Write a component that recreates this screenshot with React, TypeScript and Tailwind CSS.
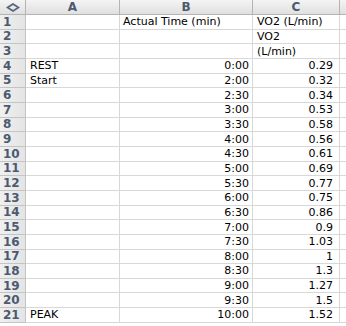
import React from "react"

const rows: [string, string, string][] = [
  ["", "Actual Time (min)", "VO2 (L/min)"],
  ["", "", "VO2"],
  ["", "", "(L/min)"],
  ["REST", "0:00", "0.29"],
  ["Start", "2:00", "0.32"],
  ["", "2:30", "0.34"],
  ["", "3:00", "0.53"],
  ["", "3:30", "0.58"],
  ["", "4:00", "0.56"],
  ["", "4:30", "0.61"],
  ["", "5:00", "0.69"],
  ["", "5:30", "0.77"],
  ["", "6:00", "0.75"],
  ["", "6:30", "0.86"],
  ["", "7:00", "0.9"],
  ["", "7:30", "1.03"],
  ["", "8:00", "1"],
  ["", "8:30", "1.3"],
  ["", "9:00", "1.27"],
  ["", "9:30", "1.5"],
  ["PEAK", "10:00", "1.52"],
]

const cols = "grid grid-cols-[26px_94px_133px_87px_6px]"

const App = () => {
  return (
    <div
      className="w-[346px] h-[326px] overflow-hidden bg-white text-[11px] text-black leading-none"
      style={{ fontFamily: '"DejaVu Sans", Verdana, sans-serif' }}
    >
      {/* column headers */}
      <div className={`${cols} h-[15px] bg-gradient-to-b from-[#f4f4f4] to-[#e0e0e0] border-b border-[#b4b4b4]`}>
        <div className="flex items-center justify-center border-r border-[#b4b4b4]">
          <svg width="14" height="9" viewBox="0 0 14 9">
            <path d="M1.5 4.5 L7 1 L12.5 4.5 L7 8 Z" fill="none" stroke="#56657b" strokeWidth="1.7" />
          </svg>
        </div>
        {["A", "B", "C"].map((c) => (
          <div key={c} className="flex items-center justify-center text-[12px] font-bold text-[#4c5a6f] border-r border-[#b4b4b4]">
            {c}
          </div>
        ))}
        <div />
      </div>

      {rows.map((r, i) => (
        <div key={i} className={`${cols} h-[14.67px]`}>
          <div className="flex items-center pl-[3px] text-[12px] font-bold text-[#4c5a6f] bg-gradient-to-r from-[#f0f0f0] to-[#e4e4e4] border-r border-b border-[#c4c4c4]">
            {i + 1}
          </div>
          <div className="flex items-center pl-[4px] border-r border-b border-[#d8d8d8]">{r[0]}</div>
          <div
            className={`flex items-center border-r border-b border-[#d8d8d8] ${
              i < 3 ? "pl-[3px]" : "justify-end pr-[3px]"
            }`}
          >
            {r[1]}
          </div>
          <div
            className={`flex items-center border-r border-b border-[#d8d8d8] ${
              i < 3 ? "pl-[4px]" : "justify-end pr-[6px]"
            }`}
          >
            {r[2]}
          </div>
          <div className="border-b border-[#d8d8d8]" />
        </div>
      ))}
    </div>
  )
}

export default App
